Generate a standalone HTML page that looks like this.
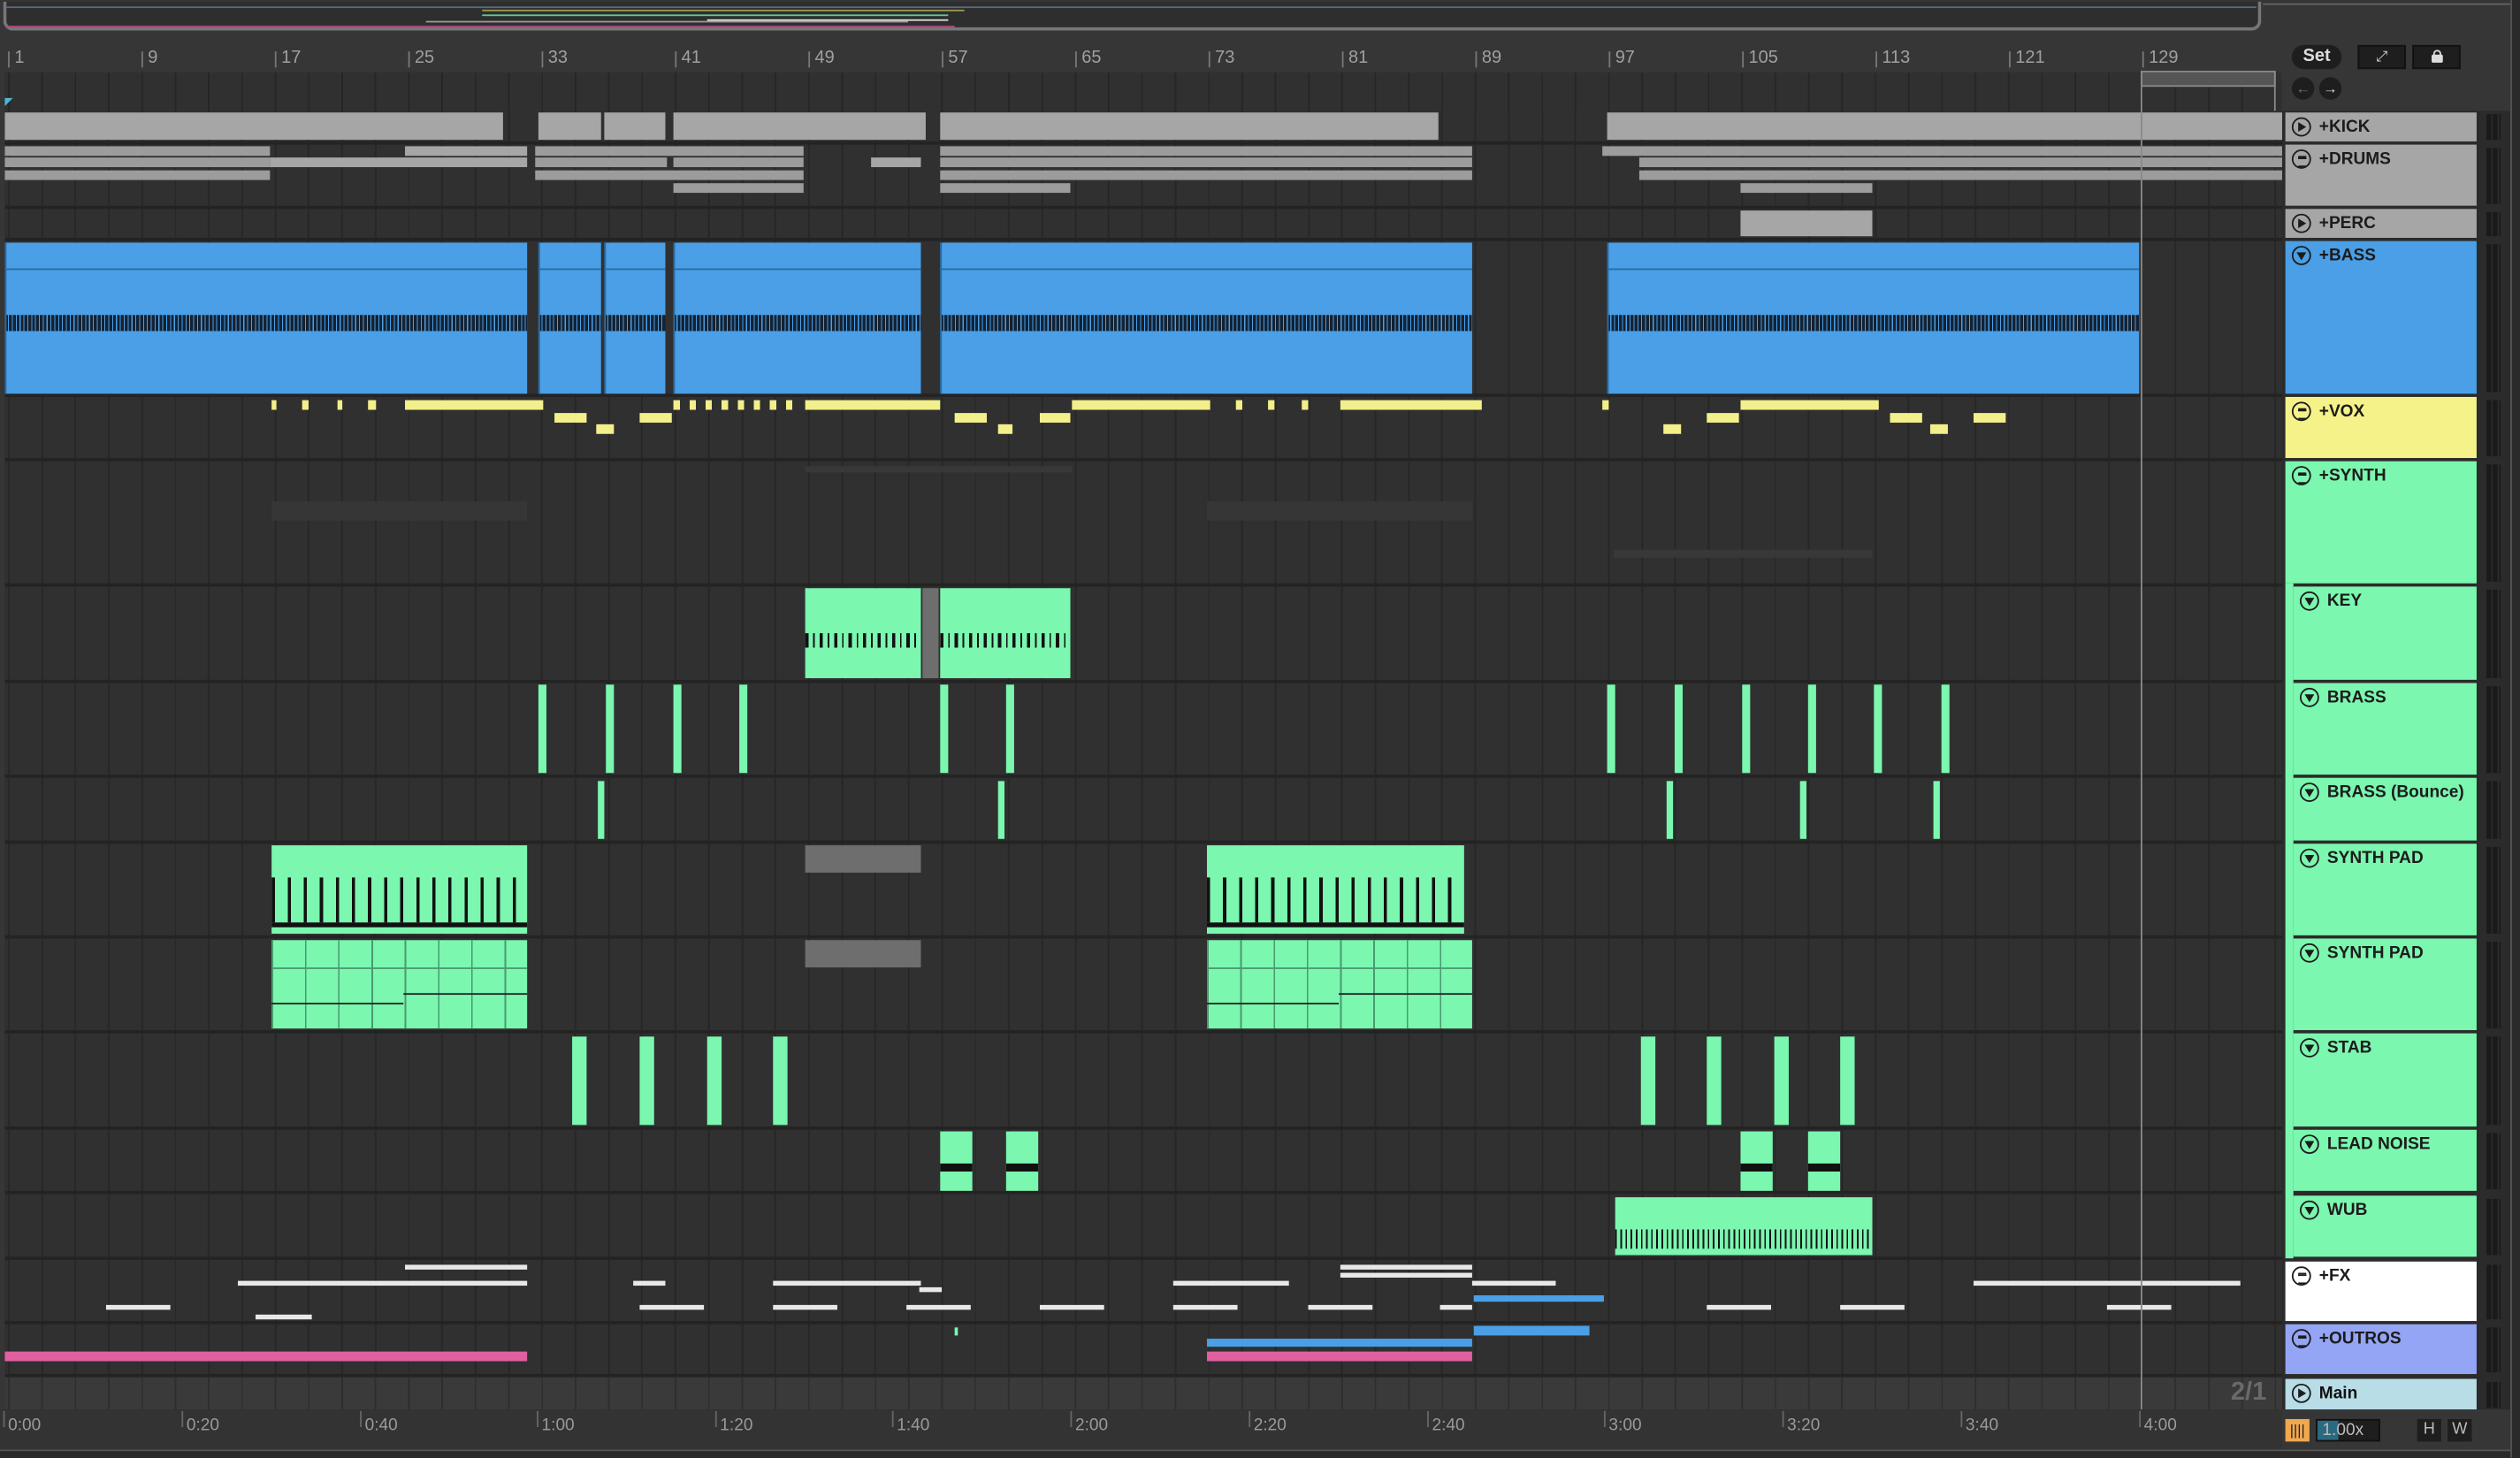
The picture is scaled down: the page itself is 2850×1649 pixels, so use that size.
<!DOCTYPE html>
<html><head><meta charset="utf-8">
<style>
*{margin:0;padding:0;box-sizing:border-box}
html,body{width:2850px;height:1648px;overflow:hidden;background:#2a2a2a}
#w{position:absolute;left:0;top:0;width:1568px;height:907px;transform:scale(1.81760);transform-origin:0 0;background:#363636;font-family:"Liberation Sans",sans-serif;overflow:hidden}
.a{position:absolute}
#tl{position:absolute;left:3px;top:69px;width:1417px;height:808px;background-color:#303030;background-image:repeating-linear-gradient(90deg,#262626 0 1px,transparent 1px 20.74px);background-position:2px 0}
.sep{position:absolute;left:3px;width:1417px;height:2px;background:#232323}
.k{position:absolute;background:#a6a6a6}
.d{position:absolute;background:#9c9c9c}
.b{position:absolute;background:#4a9fe6;border-left:1px solid #2a6aa0}
.b i{position:absolute;left:0;right:0;top:45px;height:10px;background:repeating-linear-gradient(90deg,#132233 0 1px,#4a9fe6 1px 1.6px,#132233 1.6px 2.4px)}
.b u{position:absolute;left:0;right:0;top:16px;height:1px;background:#2a6aa0}
.y{position:absolute;background:#f3ef8a}
.g{position:absolute;background:#7bf7b0}
.gr{position:absolute;background:#6e6e6e}
.wt{position:absolute;background:#e8e8e8}
.hd{position:absolute;left:1422px;width:119px;font-weight:bold;font-size:10.5px;color:#1c1c1c;padding-left:21px;padding-top:3px;white-space:nowrap}
.hd.s{left:1427px;width:114px;padding-left:21px}
.ic{position:absolute;left:4px;top:3px;width:12px;height:12px;border:1.2px solid #1c1c1c;border-radius:50%}
.tri:after{content:"";position:absolute;left:3px;top:2px;border-left:5px solid #1c1c1c;border-top:3.2px solid transparent;border-bottom:3.2px solid transparent}
.dn:after{content:"";position:absolute;left:2px;top:3px;border-top:5px solid #1c1c1c;border-left:3.2px solid transparent;border-right:3.2px solid transparent}
.ln:after{content:"";position:absolute;left:2.5px;top:2.5px;width:5px;height:5px;border-top:1px solid #1c1c1c;border-bottom:1px solid #1c1c1c;box-shadow:inset 0 2px 0 -1px #1c1c1c}
.m{position:absolute;left:1547px;width:9px;background:repeating-linear-gradient(90deg,#1a1a1a 0 3px,transparent 3px 4px)}
.rn{position:absolute;top:30px;font-size:11px;color:#a0a0a0}
.rn:before{content:"";position:absolute;left:-4px;top:2px;width:1px;height:10px;background:#777}
.tm{position:absolute;top:881px;font-size:10.5px;color:#9a9a9a}
.tm:before{content:"";position:absolute;left:-3px;top:-3px;width:1px;height:10px;background:#666}
.pad1 .n{position:absolute;left:0;right:0;top:20px;height:28px;background:repeating-linear-gradient(90deg,#111 0 2px,transparent 2px 10px)}
.pad2{background-image:repeating-linear-gradient(90deg,#4a9a70 0 1px,transparent 1px 20.7px)}
</style></head><body><div id="w">
<div class="a" style="left:2px;top:1px;width:1405px;height:18px;border:2px solid #777;border-top:none;border-radius:0 0 6px 6px;background:#2e2e2e"></div>
<div class="a" style="left:4px;top:4px;width:1400px;height:1px;background:#5a6a80"></div>
<div class="a" style="left:300px;top:9px;width:290px;height:1px;background:#60c890"></div>
<div class="a" style="left:265px;top:13px;width:300px;height:1px;background:#999"></div>
<div class="a" style="left:440px;top:12px;width:150px;height:1px;background:#ddd"></div>
<div class="a" style="left:300px;top:6px;width:300px;height:1px;background:#a09a50"></div>
<div class="a" style="left:4px;top:16px;width:590px;height:1px;background:#b04a80"></div>
<div class="a" style="left:1408px;top:2px;width:160px;height:18px;border:1px solid #666;border-left:none;border-bottom:none;border-radius:0 6px 0 0"></div>
<div class="a" style="left:3px;top:45px;width:1417px;height:24px;background-color:#303030;background-image:repeating-linear-gradient(90deg,#262626 0 1px,transparent 1px 20.74px);background-position:2px 0"></div>
<div class="rn" style="left:9px">1</div><div class="rn" style="left:92px">9</div><div class="rn" style="left:175px">17</div><div class="rn" style="left:258px">25</div><div class="rn" style="left:341px">33</div><div class="rn" style="left:424px">41</div><div class="rn" style="left:507px">49</div><div class="rn" style="left:590px">57</div><div class="rn" style="left:673px">65</div><div class="rn" style="left:756px">73</div><div class="rn" style="left:839px">81</div><div class="rn" style="left:922px">89</div><div class="rn" style="left:1005px">97</div><div class="rn" style="left:1088px">105</div><div class="rn" style="left:1171px">113</div><div class="rn" style="left:1254px">121</div><div class="rn" style="left:1337px">129</div>
<div class="a" style="left:1332px;top:44px;width:84px;height:10px;background:#555;border:1px solid #888"></div>
<div class="a" style="left:3px;top:61px;border-left:5px solid #4ab8d8;border-bottom:5px solid transparent"></div>
<div class="a" style="left:1426px;top:28px;width:31px;height:15px;border-radius:8px;background:#1e1e1e;color:#ddd;font-size:11px;font-weight:bold;text-align:center;line-height:15px">Set</div>
<div class="a" style="left:1467px;top:28px;width:30px;height:15px;background:#1e1e1e;border:1px solid #111;color:#ddd;font-size:9px;text-align:center;line-height:13px">⤢</div>
<div class="a" style="left:1501px;top:28px;width:30px;height:15px;background:#1e1e1e;border:1px solid #111"><div class="a" style="left:11px;top:5px;width:7px;height:5px;background:#ddd;border-radius:1px"></div><div class="a" style="left:12px;top:2px;width:5px;height:5px;border:1px solid #ddd;border-radius:3px 3px 0 0"></div></div>
<div class="a" style="left:1426px;top:48px;width:14px;height:14px;border-radius:50%;background:#1e1e1e;color:#777;font-size:9px;text-align:center;line-height:14px">←</div>
<div class="a" style="left:1443px;top:48px;width:14px;height:14px;border-radius:50%;background:#1e1e1e;color:#ddd;font-size:9px;text-align:center;line-height:14px">→</div>
<div id="tl"></div>
<div class="sep" style="top:88px"></div><div class="sep" style="top:128px"></div><div class="sep" style="top:148px"></div><div class="sep" style="top:245px"></div><div class="sep" style="top:285px"></div><div class="sep" style="top:363px"></div><div class="sep" style="top:423px"></div><div class="sep" style="top:482px"></div><div class="sep" style="top:523px"></div><div class="sep" style="top:582px"></div><div class="sep" style="top:641px"></div><div class="sep" style="top:701px"></div><div class="sep" style="top:741px"></div><div class="sep" style="top:782px"></div><div class="sep" style="top:822px"></div><div class="sep" style="top:855px"></div>
<div class="a" style="left:3px;top:857px;width:1417px;height:20px;background-color:#3a3a3a;background-image:repeating-linear-gradient(90deg,#2e2e2e 0 1px,transparent 1px 20.74px);background-position:2px 0"></div>
<div class="a" style="left:1388px;top:858px;font-size:16px;font-weight:bold;color:#6a6a6a">2/1</div>
<div class="k" style="left:3px;top:70px;width:310px;height:17px"></div>
<div class="k" style="left:335px;top:70px;width:39px;height:17px"></div>
<div class="k" style="left:376px;top:70px;width:38px;height:17px"></div>
<div class="k" style="left:419px;top:70px;width:157px;height:17px"></div>
<div class="k" style="left:585px;top:70px;width:310px;height:17px"></div>
<div class="k" style="left:1000px;top:70px;width:420px;height:17px"></div>
<div class="d" style="left:3px;top:91px;width:165px;height:6px"></div><div class="k" style="left:252px;top:91px;width:76px;height:6px"></div><div class="d" style="left:333px;top:91px;width:167px;height:6px"></div><div class="d" style="left:585px;top:91px;width:331px;height:6px"></div><div class="d" style="left:997px;top:91px;width:423px;height:6px"></div>
<div class="d" style="left:3px;top:98px;width:165px;height:6px"></div><div class="k" style="left:168px;top:98px;width:160px;height:6px"></div><div class="d" style="left:333px;top:98px;width:82px;height:6px"></div><div class="d" style="left:419px;top:98px;width:81px;height:6px"></div><div class="k" style="left:542px;top:98px;width:31px;height:6px"></div><div class="d" style="left:585px;top:98px;width:331px;height:6px"></div><div class="d" style="left:1020px;top:98px;width:400px;height:6px"></div>
<div class="d" style="left:3px;top:106px;width:165px;height:6px"></div><div class="d" style="left:333px;top:106px;width:167px;height:6px"></div><div class="d" style="left:585px;top:106px;width:331px;height:6px"></div><div class="d" style="left:1020px;top:106px;width:400px;height:6px"></div>
<div class="d" style="left:419px;top:114px;width:81px;height:6px"></div><div class="d" style="left:585px;top:114px;width:81px;height:6px"></div><div class="d" style="left:1083px;top:114px;width:82px;height:6px"></div>
<div class="k" style="left:1083px;top:131px;width:82px;height:16px"></div>
<div class="b" style="left:3px;top:151px;width:325px;height:94px"><u></u><i></i></div>
<div class="b" style="left:335px;top:151px;width:39px;height:94px"><u></u><i></i></div>
<div class="b" style="left:376px;top:151px;width:38px;height:94px"><u></u><i></i></div>
<div class="b" style="left:419px;top:151px;width:154px;height:94px"><u></u><i></i></div>
<div class="b" style="left:585px;top:151px;width:331px;height:94px"><u></u><i></i></div>
<div class="b" style="left:1000px;top:151px;width:331px;height:94px"><u></u><i></i></div>
<div class="y" style="left:169px;top:249px;width:3px;height:6px"></div><div class="y" style="left:188px;top:249px;width:4px;height:6px"></div><div class="y" style="left:210px;top:249px;width:3px;height:6px"></div><div class="y" style="left:229px;top:249px;width:5px;height:6px"></div><div class="y" style="left:252px;top:249px;width:86px;height:6px"></div>
<div class="y" style="left:345px;top:257px;width:20px;height:6px"></div><div class="y" style="left:371px;top:264px;width:11px;height:6px"></div><div class="y" style="left:398px;top:257px;width:20px;height:6px"></div>
<div class="y" style="left:419px;top:249px;width:80px;height:6px;background:repeating-linear-gradient(90deg,#f3ef8a 0 4px,transparent 4px 10px)"></div>
<div class="y" style="left:501px;top:249px;width:84px;height:6px"></div>
<div class="y" style="left:594px;top:257px;width:20px;height:6px"></div><div class="y" style="left:621px;top:264px;width:9px;height:6px"></div><div class="y" style="left:647px;top:257px;width:19px;height:6px"></div>
<div class="y" style="left:667px;top:249px;width:86px;height:6px"></div><div class="y" style="left:769px;top:249px;width:4px;height:6px"></div><div class="y" style="left:789px;top:249px;width:4px;height:6px"></div><div class="y" style="left:810px;top:249px;width:4px;height:6px"></div><div class="y" style="left:834px;top:249px;width:88px;height:6px"></div>
<div class="y" style="left:997px;top:249px;width:4px;height:6px"></div><div class="y" style="left:1035px;top:264px;width:11px;height:6px"></div><div class="y" style="left:1062px;top:257px;width:20px;height:6px"></div><div class="y" style="left:1083px;top:249px;width:86px;height:6px"></div><div class="y" style="left:1176px;top:257px;width:20px;height:6px"></div><div class="y" style="left:1201px;top:264px;width:11px;height:6px"></div><div class="y" style="left:1228px;top:257px;width:20px;height:6px"></div>
<div class="a" style="left:169px;top:312px;width:159px;height:12px;background:#363636"></div><div class="a" style="left:501px;top:290px;width:166px;height:4px;background:#383838"></div><div class="a" style="left:751px;top:312px;width:165px;height:12px;background:#363636"></div><div class="a" style="left:1004px;top:342px;width:161px;height:5px;background:#383838"></div>
<div class="g" style="left:501px;top:366px;width:72px;height:56px"><div class="a" style="left:0;right:0;top:28px;height:9px;background:repeating-linear-gradient(90deg,#111 0 2px,transparent 2px 5px,#111 5px 6px,transparent 6px 9px)"></div></div>
<div class="gr" style="left:574px;top:366px;width:10px;height:56px"></div>
<div class="g" style="left:585px;top:366px;width:81px;height:56px"><div class="a" style="left:0;right:0;top:28px;height:9px;background:repeating-linear-gradient(90deg,#111 0 2px,transparent 2px 5px,#111 5px 6px,transparent 6px 9px)"></div></div>
<div class="g" style="left:335px;top:426px;width:5px;height:55px"></div><div class="g" style="left:377px;top:426px;width:5px;height:55px"></div><div class="g" style="left:419px;top:426px;width:5px;height:55px"></div><div class="g" style="left:460px;top:426px;width:5px;height:55px"></div><div class="g" style="left:585px;top:426px;width:5px;height:55px"></div><div class="g" style="left:626px;top:426px;width:5px;height:55px"></div><div class="g" style="left:1000px;top:426px;width:5px;height:55px"></div><div class="g" style="left:1042px;top:426px;width:5px;height:55px"></div><div class="g" style="left:1084px;top:426px;width:5px;height:55px"></div><div class="g" style="left:1125px;top:426px;width:5px;height:55px"></div><div class="g" style="left:1166px;top:426px;width:5px;height:55px"></div><div class="g" style="left:1208px;top:426px;width:5px;height:55px"></div>
<div class="g" style="left:372px;top:486px;width:4px;height:36px"></div><div class="g" style="left:621px;top:486px;width:4px;height:36px"></div><div class="g" style="left:1037px;top:486px;width:4px;height:36px"></div><div class="g" style="left:1120px;top:486px;width:4px;height:36px"></div><div class="g" style="left:1203px;top:486px;width:4px;height:36px"></div>
<div class="g pad1" style="left:169px;top:526px;width:159px;height:55px"><div class="n"></div><div class="a" style="left:0;right:0;top:48px;height:3px;background:#111"></div></div>
<div class="gr" style="left:501px;top:526px;width:72px;height:17px"></div>
<div class="g pad1" style="left:751px;top:526px;width:160px;height:55px"><div class="n"></div><div class="a" style="left:0;right:0;top:48px;height:3px;background:#111"></div></div>
<div class="g pad2" style="left:169px;top:585px;width:159px;height:55px;background-image:repeating-linear-gradient(90deg,#4a9a70 0 1px,transparent 1px 20.7px)"><div class="a" style="left:0;right:0;top:17px;height:1px;background:#4a9a70"></div><div class="a" style="left:0;width:82px;top:39px;height:1px;background:#222"></div><div class="a" style="left:82px;right:0;top:33px;height:1px;background:#222"></div></div>
<div class="gr" style="left:501px;top:585px;width:72px;height:17px"></div>
<div class="g pad2" style="left:751px;top:585px;width:165px;height:55px"><div class="a" style="left:0;right:0;top:17px;height:1px;background:#4a9a70"></div><div class="a" style="left:0;width:82px;top:39px;height:1px;background:#222"></div><div class="a" style="left:82px;right:0;top:33px;height:1px;background:#222"></div></div>
<div class="g" style="left:356px;top:645px;width:9px;height:55px"></div><div class="g" style="left:398px;top:645px;width:9px;height:55px"></div><div class="g" style="left:440px;top:645px;width:9px;height:55px"></div><div class="g" style="left:481px;top:645px;width:9px;height:55px"></div><div class="g" style="left:1021px;top:645px;width:9px;height:55px"></div><div class="g" style="left:1062px;top:645px;width:9px;height:55px"></div><div class="g" style="left:1104px;top:645px;width:9px;height:55px"></div><div class="g" style="left:1145px;top:645px;width:9px;height:55px"></div>
<div class="g" style="left:585px;top:704px;width:20px;height:37px"><div class="a" style="left:0;right:0;top:20px;height:5px;background:#111"></div></div>
<div class="g" style="left:626px;top:704px;width:20px;height:37px"><div class="a" style="left:0;right:0;top:20px;height:5px;background:#111"></div></div>
<div class="g" style="left:1083px;top:704px;width:20px;height:37px"><div class="a" style="left:0;right:0;top:20px;height:5px;background:#111"></div></div>
<div class="g" style="left:1125px;top:704px;width:20px;height:37px"><div class="a" style="left:0;right:0;top:20px;height:5px;background:#111"></div></div>
<div class="g" style="left:1005px;top:745px;width:160px;height:36px"><div class="a" style="left:0;right:0;top:20px;height:12px;background:repeating-linear-gradient(90deg,#111 0 1px,transparent 1px 3.2px)"></div></div>
<div class="wt" style="left:252px;top:787px;width:76px;height:3px"></div><div class="wt" style="left:148px;top:797px;width:180px;height:3px"></div><div class="wt" style="left:66px;top:812px;width:40px;height:3px"></div><div class="wt" style="left:159px;top:818px;width:35px;height:3px"></div>
<div class="wt" style="left:394px;top:797px;width:20px;height:3px"></div><div class="wt" style="left:398px;top:812px;width:40px;height:3px"></div><div class="wt" style="left:481px;top:797px;width:92px;height:3px"></div><div class="wt" style="left:572px;top:801px;width:14px;height:3px"></div><div class="wt" style="left:481px;top:812px;width:40px;height:3px"></div><div class="wt" style="left:564px;top:812px;width:40px;height:3px"></div>
<div class="wt" style="left:647px;top:812px;width:40px;height:3px"></div><div class="wt" style="left:730px;top:797px;width:72px;height:3px"></div><div class="wt" style="left:730px;top:812px;width:40px;height:3px"></div><div class="wt" style="left:834px;top:787px;width:82px;height:3px"></div><div class="wt" style="left:834px;top:792px;width:82px;height:3px"></div><div class="wt" style="left:814px;top:812px;width:40px;height:3px"></div><div class="wt" style="left:896px;top:812px;width:20px;height:3px"></div><div class="wt" style="left:916px;top:797px;width:52px;height:3px"></div>
<div class="wt" style="left:1062px;top:812px;width:40px;height:3px"></div><div class="wt" style="left:1145px;top:812px;width:40px;height:3px"></div><div class="wt" style="left:1228px;top:797px;width:166px;height:3px"></div><div class="wt" style="left:1311px;top:812px;width:40px;height:3px"></div>
<div class="a" style="left:917px;top:806px;width:81px;height:4px;background:#4a9fe6"></div>
<div class="a" style="left:3px;top:841px;width:325px;height:6px;background:#e060a0"></div>
<div class="a" style="left:594px;top:826px;width:2px;height:5px;background:#7bf7b0"></div>
<div class="a" style="left:751px;top:833px;width:165px;height:5px;background:#4a9fe6"></div>
<div class="a" style="left:751px;top:841px;width:165px;height:6px;background:#e060a0"></div>
<div class="a" style="left:917px;top:825px;width:72px;height:6px;background:#4a9fe6"></div>
<div class="a" style="left:1332px;top:45px;width:1px;height:850px;background:#8a8a8a"></div>
<div class="a" style="left:1415px;top:45px;width:1px;height:24px;background:#8a8a8a"></div>
<div class="a" style="left:0;top:877px;width:1420px;height:30px;background:#333"></div>
<div class="tm" style="left:5px">0:00</div><div class="tm" style="left:116px">0:20</div><div class="tm" style="left:227px">0:40</div><div class="tm" style="left:337px">1:00</div><div class="tm" style="left:448px">1:20</div><div class="tm" style="left:558px">1:40</div><div class="tm" style="left:669px">2:00</div><div class="tm" style="left:780px">2:20</div><div class="tm" style="left:891px">2:40</div><div class="tm" style="left:1001px">3:00</div><div class="tm" style="left:1112px">3:20</div><div class="tm" style="left:1223px">3:40</div><div class="tm" style="left:1334px">4:00</div>
<div class="a" style="left:0;top:902px;width:1568px;height:5px;background:#2a2a2a;border-top:1px solid #555"></div>
<div class="a" style="left:1420px;top:69px;width:148px;height:808px;background:#2b2b2b"></div>
<div class="a" style="left:1422px;top:363px;width:5px;height:420px;background:#7bf7b0"></div>
<div class="hd" style="top:70px;height:18px;background:#a6a6a6"><span class="ic tri"></span>+KICK</div>
<div class="hd" style="top:90px;height:38px;background:#a6a6a6"><span class="ic ln"></span>+DRUMS</div>
<div class="hd" style="top:130px;height:18px;background:#a6a6a6"><span class="ic tri"></span>+PERC</div>
<div class="hd" style="top:150px;height:95px;background:#4a9fe6"><span class="ic dn"></span>+BASS</div>
<div class="hd" style="top:247px;height:38px;background:#f5f28a"><span class="ic ln"></span>+VOX</div>
<div class="hd" style="top:287px;height:76px;background:#7bf7b0"><span class="ic ln"></span>+SYNTH</div>
<div class="hd s" style="top:365px;height:58px;background:#7bf7b0"><span class="ic dn"></span>KEY</div>
<div class="hd s" style="top:425px;height:57px;background:#7bf7b0"><span class="ic dn"></span>BRASS</div>
<div class="hd s" style="top:484px;height:39px;background:#7bf7b0"><span class="ic dn"></span>BRASS (Bounce)</div>
<div class="hd s" style="top:525px;height:57px;background:#7bf7b0"><span class="ic dn"></span>SYNTH PAD</div>
<div class="hd s" style="top:584px;height:57px;background:#7bf7b0"><span class="ic dn"></span>SYNTH PAD</div>
<div class="hd s" style="top:643px;height:58px;background:#7bf7b0"><span class="ic dn"></span>STAB</div>
<div class="hd s" style="top:703px;height:38px;background:#7bf7b0"><span class="ic dn"></span>LEAD NOISE</div>
<div class="hd s" style="top:744px;height:38px;background:#7bf7b0"><span class="ic dn"></span>WUB</div>
<div class="hd" style="top:785px;height:37px;background:#ffffff"><span class="ic ln"></span>+FX</div>
<div class="hd" style="top:824px;height:31px;background:#95a5f5"><span class="ic ln"></span>+OUTROS</div>
<div class="hd" style="top:858px;height:19px;background:#b8dde6;color:#111"><span class="ic tri"></span>Main</div>
<div class="m" style="top:71px;height:16px"></div><div class="m" style="top:92px;height:35px"></div><div class="m" style="top:132px;height:15px"></div><div class="m" style="top:152px;height:92px"></div><div class="m" style="top:249px;height:35px"></div><div class="m" style="top:289px;height:73px"></div><div class="m" style="top:367px;height:55px"></div><div class="m" style="top:427px;height:54px"></div><div class="m" style="top:486px;height:36px"></div><div class="m" style="top:527px;height:54px"></div><div class="m" style="top:586px;height:54px"></div><div class="m" style="top:645px;height:55px"></div><div class="m" style="top:705px;height:35px"></div><div class="m" style="top:746px;height:35px"></div><div class="m" style="top:787px;height:34px"></div><div class="m" style="top:826px;height:28px"></div><div class="m" style="top:860px;height:16px"></div>
<div class="a" style="left:1422px;top:883px;width:15px;height:14px;background:#f0a850;color:#222;font-size:9px;text-align:center;line-height:14px">||||</div>
<div class="a" style="left:1441px;top:883px;width:40px;height:14px;background:#1e1e1e;border:1px solid #111"><div class="a" style="left:0;top:0;width:13px;height:12px;background:#2a6a80"></div><div class="a" style="left:3px;top:0;font-size:10.5px;color:#bbb">1.00x</div></div>
<div class="a" style="left:1504px;top:883px;width:15px;height:14px;background:#1e1e1e;color:#bbb;font-size:10px;text-align:center;line-height:14px">H</div>
<div class="a" style="left:1523px;top:883px;width:15px;height:14px;background:#1e1e1e;color:#bbb;font-size:10px;text-align:center;line-height:14px">W</div>
<div class="a" style="left:1562px;top:0;width:6px;height:907px;background:#2a2a2a;border-left:1px solid #555"></div>
</div></body></html>
